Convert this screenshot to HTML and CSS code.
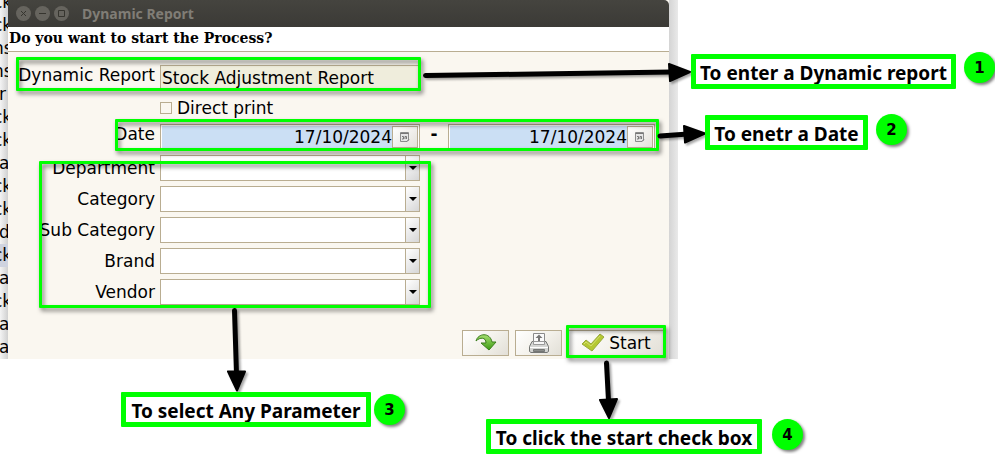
FILE: index.html
```
<!DOCTYPE html>
<html lang="en">
<head>
    <meta charset="UTF-8">
    <meta name="viewport" content="width=device-width, initial-scale=1.0">
    <title>Dynamic Report</title>
    <link rel="stylesheet" href="styles.css">
</head>
<body>
    <div class="desktop">
        <!-- List behind the dialog -->
        <ul class="behind">
            <li>ck</li>
            <li>ck</li>
            <li>ns</li>
            <li>ns</li>
            <li class="single">r</li>
            <li>ck</li>
            <li>ck</li>
            <li class="single">a</li>
            <li>ck</li>
            <li>ck</li>
            <li class="single">d</li>
            <li class="selected">ck</li>
            <li class="single">a</li>
            <li>ck</li>
            <li class="single">a</li>
            <li class="single">a</li>
        </ul>

        <div class="dialog">
            <div class="titlebar">
                <button type="button" class="win-btn" aria-label="Close">
                    <svg viewBox="0 0 15 15"><path d="M5 5l5 5M10 5l-5 5"/></svg>
                </button>
                <button type="button" class="win-btn" aria-label="Minimize">
                    <svg viewBox="0 0 15 15"><path d="M4 7.5h7"/></svg>
                </button>
                <button type="button" class="win-btn" aria-label="Maximize">
                    <svg viewBox="0 0 15 15"><path d="M4.5 4.5h6v6h-6z"/></svg>
                </button>
                <span class="title">Dynamic Report</span>
            </div>
            <p class="question">Do you want to start the Process?</p>

            <form class="form">
                <label for="report" class="top">Dynamic Report</label>
                <input type="text" id="report" class="field readonly" value="Stock Adjustment Report" readonly>

                <div class="check">
                    <input type="checkbox" id="direct">
                    <label for="direct">Direct print</label>
                </div>

                <label for="date-from" class="top">Date</label>
                <div class="dates">
                    <div class="date date-from">
                        <input type="text" id="date-from" value="17/10/2024">
                        <button type="button" aria-label="Pick start date">
                            <svg viewBox="0 0 12 12"><path class="cal" d="M1.5 1.5h8v7.5l-1.5 1.5h-6.5z"/><path class="cal-line" d="M1.5 2.5h8M3 5.5h1.5v2.5H3M6 8V5.5h1.5V8M8 10.5l2-2"/></svg>
                        </button>
                    </div>
                    <span class="dash">-</span>
                    <div class="date date-to">
                        <input type="text" id="date-to" aria-label="End date" value="17/10/2024">
                        <button type="button" aria-label="Pick end date">
                            <svg viewBox="0 0 12 12"><path class="cal" d="M1.5 1.5h8v7.5l-1.5 1.5h-6.5z"/><path class="cal-line" d="M1.5 2.5h8M3 5.5h1.5v2.5H3M6 8V5.5h1.5V8M8 10.5l2-2"/></svg>
                        </button>
                    </div>
                </div>

                <label for="department">Department</label>
                <div class="combo">
                    <select id="department"><option></option></select>
                </div>
                <label for="category">Category</label>
                <div class="combo">
                    <select id="category"><option></option></select>
                </div>
                <label for="sub-category">Sub Category</label>
                <div class="combo">
                    <select id="sub-category"><option></option></select>
                </div>
                <label for="brand">Brand</label>
                <div class="combo">
                    <select id="brand"><option></option></select>
                </div>
                <label for="vendor">Vendor</label>
                <div class="combo">
                    <select id="vendor"><option></option></select>
                </div>
            </form>

            <div class="actions">
                <button type="button" class="btn" aria-label="Reset">
                    <svg width="24" height="20" viewBox="0 0 24 20">
                        <defs>
                            <linearGradient id="green" x1="0" y1="0" x2="0" y2="1">
                                <stop offset="0" stop-color="#a5e070"/>
                                <stop offset="1" stop-color="#3c9a12"/>
                            </linearGradient>
                        </defs>
                        <path d="M2 8C4 0 16-1 18 9h4l-7 8-8-7h5C12 4 6 4 2 8z" fill="url(#green)" stroke="#3a7d1c" stroke-linejoin="round"/>
                    </svg>
                </button>
                <button type="button" class="btn" aria-label="Print">
                    <svg width="22" height="22" viewBox="0 0 22 22">
                        <path d="M5.5 11V1.5h11V11" fill="#fafafa" stroke="#8b8b8b"/>
                        <path d="M11 2.5l3.5 3.5H12v3h-2V6H7.5z" fill="#777"/>
                        <path d="M4 9.5h14l2.5 5v5l-1.5 1h-16l-1.5-1v-5z" fill="#d4d5d3" stroke="#747674"/>
                        <path d="M5.5 9.5h11v3h-11z" fill="#f7f7f7" stroke="#999"/>
                        <path d="M2 15.5h18" stroke="#fff"/>
                        <path d="M5.5 17.5h11v2h-11z" fill="#8a8c8a" stroke="#747674"/>
                    </svg>
                </button>
                <button type="button" class="btn start">
                    <svg width="24" height="20" viewBox="0 0 24 20">
                        <path d="M1 11l4-4 5 4L19 1l4 3-12 14z" fill="#b5c832" stroke="#97a83c" stroke-linejoin="round"/>
                        <path d="M3 11l2-2 5 4L19 3" fill="none" stroke="#d3df70"/>
                    </svg>
                    Start
                </button>
            </div>
        </div>
        <div class="edge"></div>
    </div>

    <!-- Tutorial marks drawn over the dialog -->
    <div class="marks">
        <div class="frame frame-report"></div>
        <div class="frame frame-date"></div>
        <div class="frame frame-params"></div>
        <div class="frame frame-start"></div>

        <svg class="arrows" width="995" height="454" viewBox="0 0 995 454">
            <path class="line" d="M425.5 75.5L672 72M660 136l28-2M234.5 310.5l2 64M606.5 363l2 38"/>
            <path class="head" d="M669 64l21 8-20 9zM684 126l21 7.5-20 9zM228 371.5h17l-8 19zM600 400l17-1-8 19z"/>
        </svg>

        <div class="callout callout-1">To enter a Dynamic report</div>
        <div class="callout callout-2">To enetr a Date</div>
        <div class="callout callout-3">To select Any Parameter</div>
        <div class="callout callout-4">To click the start check box</div>

        <span class="number number-1">1</span>
        <span class="number number-2">2</span>
        <span class="number number-3">3</span>
        <span class="number number-4">4</span>
    </div>
</body>
</html>
```
FILE: styles.css
```
* {
    box-sizing: border-box;
}

body {
    margin: 0;
    background-color: #fff;
    color: #000;
    font-family: "DejaVu Sans", sans-serif;
    font-size: 17px;
    position: relative;
    overflow: hidden;
    min-height: 100vh;
}

button, input, select {
    font: inherit;
    color: inherit;
    margin: 0;
    padding: 0;
    border-radius: 0;
}

.desktop {
    display: flex;
    height: 359px;
}

/* list behind */
.behind {
    flex: 0 0 8px;
    margin: 0;
    padding: 0;
    list-style: none;
    overflow: hidden;
    background: linear-gradient(to right, #f4f4f4, #d0d0d0);
}

.behind li {
    height: 23px;
    line-height: 23px;
    text-indent: -7px;
    white-space: nowrap;
}

.behind li:first-child {
    margin-top: -9px;
}

.behind .single {
    text-indent: -1px;
}

.behind .selected {
    background-color: #cfd3df;
}

.edge {
    flex: 0 0 9px;
    background: linear-gradient(to right, #d4d4d4, #e9e9e9);
}

/* dialog */
.dialog {
    flex: 1;
    max-width: 661px;
    display: flex;
    flex-direction: column;
    background-color: #faf7f0;
}

.titlebar {
    display: flex;
    align-items: center;
    gap: 4px;
    height: 27px;
    padding: 0 8px;
    background: linear-gradient(#45443f, #3b3a36);
    border-radius: 0 5px 0 0;
}

.win-btn {
    width: 15px;
    height: 15px;
    border: none;
    border-radius: 50%;
    background-color: #66645e;
}

.win-btn svg {
    display: block;
    fill: none;
    stroke: #36352f;
}

.title {
    margin-left: 9px;
    color: #807d76;
    font-family: "Noto Sans", sans-serif;
    font-size: 14px;
    font-weight: bold;
}

.question {
    margin: 0;
    height: 25px;
    padding: 0 1px;
    border-bottom: 1px solid #b9ad91;
    background-color: #fff;
    font-family: "DejaVu Serif", serif;
    font-size: 14px;
    font-weight: bold;
    line-height: 22px;
}

.form {
    display: grid;
    grid-template-columns: 147px minmax(0, 1fr);
    grid-template-rows: 26px 23px;
    grid-auto-rows: 26px;
    gap: 5px;
    padding: 13px 14px 0 0;
}

.form > label {
    line-height: 26px;
    text-align: right;
    white-space: nowrap;
}

.form > .top {
    line-height: 20px;
}

.field {
    width: 260px;
    border: 1px solid #b9ad91;
    padding: 0 1px;
}

.readonly {
    background-color: #efeddc;
}

.check {
    grid-column: 2;
    display: flex;
    align-items: center;
    gap: 5px;
}

.check input {
    appearance: none;
    width: 12px;
    height: 12px;
    border: 1px solid #b9ad91;
}

.dates {
    display: flex;
}

.date {
    display: flex;
    border: 1px solid #b9ad91;
    padding: 1px;
    background-color: #fff;
}

.date-from {
    flex: 0 0 260px;
}

.date-to {
    flex: 1;
    min-width: 0;
}

.date input {
    flex: 1;
    min-width: 0;
    border: none;
    background-color: #cbdff4;
    text-align: right;
}

.date button {
    flex: 0 0 26px;
    display: flex;
    align-items: center;
    justify-content: center;
    border: 1px solid #b9ad91;
    background: linear-gradient(135deg, #fff, #e4e1da);
}

.date svg {
    width: 12px;
    height: 12px;
}

.cal {
    fill: #e6e6e6;
    stroke: #8c8c8c;
}

.cal-line {
    fill: none;
    stroke: #777;
}

.dash {
    flex: 0 0 28px;
    font-weight: bold;
    line-height: 20px;
    text-align: center;
}

.combo {
    position: relative;
    width: 260px;
}

.combo select {
    appearance: none;
    display: block;
    width: 100%;
    height: 26px;
    border: 1px solid #b9ad91;
    background: linear-gradient(135deg, #fff, #d6d6d6) right / 13px 100% no-repeat #fff;
}

.combo::before {
    content: "";
    position: absolute;
    top: 0;
    right: 14px;
    width: 1px;
    height: 100%;
    background-color: #b9ad91;
}

.combo::after {
    content: "";
    position: absolute;
    top: 11px;
    right: 3px;
    border: 4px solid transparent;
    border-top-color: #000;
    border-bottom: none;
}

.actions {
    display: flex;
    justify-content: flex-end;
    gap: 6px;
    margin-top: auto;
    padding: 0 5px 3px;
}

.btn {
    display: flex;
    align-items: center;
    justify-content: center;
    gap: 4px;
    width: 47px;
    height: 26px;
    border: 1px solid #b9ad91;
    background: linear-gradient(135deg, #fff, #f4f2ec 50%, #e2dfd7);
}

.start {
    width: 96px;
}

/* marks */
.marks {
    position: absolute;
    inset: 0;
    pointer-events: none;
}

.frame {
    position: absolute;
    border: 3px solid #0f0;
    border-radius: 1px;
    filter: drop-shadow(2px 3px 2px rgba(0, 0, 0, 0.5));
}

.frame-report {
    left: 16px;
    top: 57px;
    width: 405px;
    height: 34px;
}

.frame-date {
    left: 115px;
    top: 119px;
    width: 544px;
    height: 32px;
}

.frame-params {
    left: 39px;
    top: 161px;
    width: 392px;
    height: 147px;
}

.frame-start {
    left: 566px;
    top: 325px;
    width: 100px;
    height: 33px;
}

.arrows {
    position: absolute;
    left: 0;
    top: 0;
    filter: drop-shadow(2px 2px 1px rgba(0, 0, 0, 0.35));
}

.line {
    fill: none;
    stroke: #000;
    stroke-width: 5;
    stroke-linecap: round;
}

.head {
    stroke: #000;
    stroke-width: 2;
    stroke-linejoin: round;
}

.callout {
    position: absolute;
    height: 35px;
    border: 5px solid #0f0;
    border-radius: 1px;
    background-color: #fff;
    overflow: hidden;
    font-family: "Noto Sans", sans-serif;
    font-size: 19px;
    font-weight: bold;
    line-height: 29px;
    text-align: center;
    white-space: nowrap;
}

.callout-1 {
    left: 691px;
    top: 54px;
    width: 265px;
}

.callout-2 {
    left: 705px;
    top: 115px;
    width: 163px;
}

.callout-3 {
    left: 121px;
    top: 392px;
    width: 250px;
}

.callout-4 {
    left: 486px;
    top: 419px;
    width: 276px;
}

.number {
    position: absolute;
    width: 31px;
    height: 31px;
    border-radius: 50%;
    background-color: #0f0;
    box-shadow: 2px 2px 3px rgba(0, 0, 0, 0.5);
    font-size: 15px;
    font-weight: bold;
    line-height: 32px;
    text-align: center;
}

.number-1 {
    left: 964px;
    top: 52px;
}

.number-2 {
    left: 876px;
    top: 114px;
}

.number-3 {
    left: 374px;
    top: 394px;
}

.number-4 {
    left: 772px;
    top: 419px;
}
```
